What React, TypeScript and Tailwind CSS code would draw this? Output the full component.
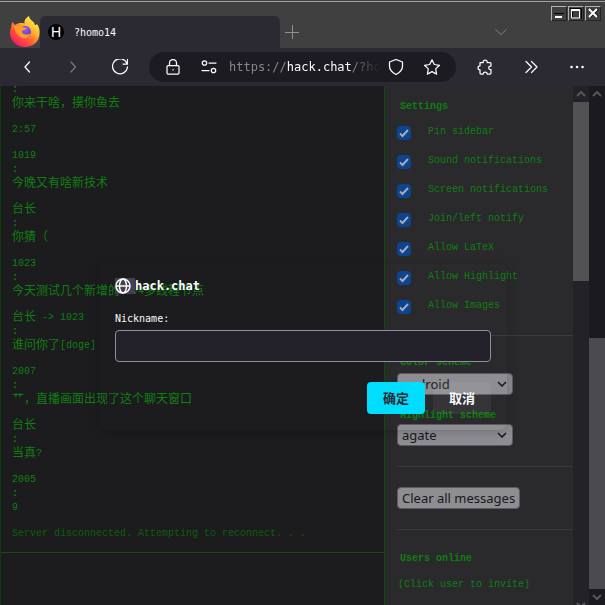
import type { ReactNode } from "react";

const L = ({ children }: { children: ReactNode }) => (
  <span className="inline-block align-middle font-['Liberation_Mono','Noto_Sans_CJK_SC',monospace] text-[10px] leading-3 whitespace-pre">
    {children}
  </span>
);

const messages: { nick?: ReactNode; continued?: boolean; text: ReactNode }[] = [
  { continued: true, text: "你来干啥，摸你鱼去" },
  { text: <L>2:57</L> },
  { nick: <L>1019</L>, text: "今晚又有啥新技术" },
  { nick: "台长", text: "你猜（" },
  { nick: <L>1023</L>, text: <>今天测试几个新增的<L>IPv4</L>多线程节点</> },
  { nick: <>台长<L>{" -> 1023"}</L></>, text: <>谁问你了<L>[doge]</L></> },
  { nick: <L>2007</L>, text: "艹，直播画面出现了这个聊天窗口" },
  { nick: "台长", text: <>当真<L>?</L></> },
  { nick: <L>2005</L>, text: <L>9</L> },
];

const settings = [
  "Pin sidebar",
  "Sound notifications",
  "Screen notifications",
  "Join/left notify",
  "Allow LaTeX",
  "Allow Highlight",
  "Allow Images",
];

function FirefoxLogo() {
  return (
    <svg viewBox="0 0 32 32" className="h-8 w-8 shrink-0" aria-hidden="true">
      <defs>
        <linearGradient id="flame" x1="0.85" y1="0.1" x2="0.2" y2="0.95">
          <stop offset="0" stopColor="#fff44f" />
          <stop offset="0.35" stopColor="#ffb02e" />
          <stop offset="0.65" stopColor="#ff5a36" />
          <stop offset="1" stopColor="#f5156c" />
        </linearGradient>
        <radialGradient id="globe" cx="0.5" cy="0.3" r="0.7">
          <stop offset="0" stopColor="#9059ff" />
          <stop offset="1" stopColor="#4a3fc4" />
        </radialGradient>
      </defs>
      <path d="M3 12c0-2 .5-4 1.500-6 1 1 1.500 2 2.500 3 2-1.500 4-2 6-2 1.500 0 2.500 0 3.500.5C16 4 18 2 21 0c.5 3 2 4 4 5.500 1 .8 1.500 2 2 3.500 1 0 1.500-.5 2-1 2 3 3 6 2.500 10C31 26 25 31 17 31S2 25 2 17c0-2 .3-3 1-5z" fill="url(#flame)" />
      <circle cx="17" cy="16" r="6" fill="url(#globe)" />
      <path d="M6 10c3 0 5-.5 7.500.5C15 11 16 12 19 12c-1 2-5 2-5 3.500 0 2 2 3 4.500 3 2 0 3-.5 4-1.500-.5 4-4 6-7.500 5-5-1-8-6-9-12z" fill="#ff9a2b" />
    </svg>
  );
}

function ScrollArrow({ up }: { up?: boolean }) {
  return (
    <span className="flex h-4 w-4 shrink-0 items-center justify-center text-[#58585c]">
      <svg viewBox="0 0 10 6" className="h-1.5 w-2.5" fill="none" stroke="currentColor" strokeWidth="2">
        <path d={up ? "m1 5 4-4 4 4" : "m1 1 4 4 4-4"} />
      </svg>
    </span>
  );
}

function WindowButton({ label, children }: { label: string; children: ReactNode }) {
  return (
    <button aria-label={label} className="h-[15px] w-4 border border-t-[#b0b0b0] border-r-[#222] border-b-[#222] border-l-[#b0b0b0] bg-[#404040]">
      <svg viewBox="0 0 14 13" className="h-[13px] w-3.5" fill="none">{children}</svg>
    </button>
  );
}

function TitleBar() {
  return (
    <header className="flex h-12 items-end border-t border-[#404040] bg-[#404040] pl-2 shadow-[inset_0_1px_0_#a0a0a0]">
      <FirefoxLogo />
      <div className="flex h-8 w-60 items-center gap-2.5 rounded-t-md bg-[#2b2a33] px-2">
        <span className="flex h-4 w-4 items-center justify-center rounded-full bg-black font-['Liberation_Sans',sans-serif] text-sm text-white">H</span>
        <span className="font-['DejaVu_Sans_Mono',monospace] text-[10px] text-[#fbfbfe]">?homo14</span>
      </div>
      <button aria-label="New tab" className="flex h-8 w-6 items-center justify-center text-[#909090]">
        <svg viewBox="0 0 14 14" className="h-3.5 w-3.5" stroke="currentColor"><path d="M7.500 0v14M0 7.500h14" /></svg>
      </button>
      <button aria-label="List all tabs" className="mr-11 ml-auto flex h-8 items-center text-[#808080]">
        <svg viewBox="0 0 12 6" className="h-1.5 w-3" fill="none" stroke="currentColor"><path d="M.5.5 6 5.500 11.500.5" /></svg>
      </button>
      <div className="mr-1 flex gap-px self-start pt-[5px]">
        <WindowButton label="Minimize">
          <path d="M2 6.500h10" stroke="#000" />
          <path d="M3 10h7" stroke="#fff" strokeWidth="2" />
        </WindowButton>
        <WindowButton label="Maximize">
          <path d="M1 1.500h11.500V12" stroke="#000" />
          <path d="M2.500 11V3h8v8z" stroke="#fff" />
          <path d="M2 3h9" stroke="#fff" strokeWidth="2" />
          <path d="M3.500 10V4.500" stroke="#000" />
        </WindowButton>
        <WindowButton label="Close">
          <path d="m4 2 8 8m0-8-8 8" stroke="#000" strokeWidth="2" />
          <path d="m3 2 8 8m0-8-8 8" stroke="#fff" strokeWidth="2" />
        </WindowButton>
      </div>
    </header>
  );
}

function NavIcon({ label, children, dim }: { label: string; children: ReactNode; dim?: boolean }) {
  return (
    <button aria-label={label} className={dim ? "shrink-0 text-[#77767c]" : "shrink-0 text-[#fbfbfe]"}>
      <svg viewBox="0 0 16 16" className="h-4 w-4" fill="none" stroke="currentColor" strokeWidth="1.250" strokeLinejoin="round" strokeLinecap="round">
        {children}
      </svg>
    </button>
  );
}

function NavBar() {
  return (
    <nav className="flex h-[38px] items-center bg-[#2b2a33] px-5">
      <div className="flex gap-[30px]">
        <NavIcon label="Back"><path d="M9.500 3 5 8l4.500 5" /></NavIcon>
        <NavIcon label="Forward" dim><path d="m5 3 4.500 5L5 13" /></NavIcon>
        <NavIcon label="Reload"><path d="M15 4.500A7.500 7.500 0 1 0 15.500 8M15.500.5V5H11" /></NavIcon>
      </div>
      <div className="mx-[21px] flex h-[30px] min-w-0 flex-1 items-center gap-5 rounded-full bg-[#1c1b22] px-4">
        <NavIcon label="Site security"><rect x="2" y="6.500" width="12" height="8.500" rx="1" /><path d="M4.500 6.500V4a3.500 3.500 0 0 1 7 0v2.500M8 10.500v.5" /></NavIcon>
        <NavIcon label="Permissions"><circle cx="3.500" cy="4" r="2.200" /><circle cx="12.500" cy="11.500" r="2.200" /><path d="M8 4h7M1 11.500h7" /></NavIcon>
        <span className="-mr-4 -ml-2 min-w-0 flex-1 font-['DejaVu_Sans_Mono',monospace] text-xs whitespace-nowrap text-[#87868c] [mask-image:linear-gradient(to_left,transparent_4px,black_32px)]">
          https://<span className="text-[#fbfbfe]">hack.chat</span>/?ho
        </span>
        <NavIcon label="Tracking protection"><path d="M8 .5 14.500 3v4c0 4-2.500 6.500-6.500 8.500C4 13.500 1.500 11 1.500 7V3z" /></NavIcon>
        <NavIcon label="Bookmark"><path d="m8 .8 2.300 4.700 5.200.8-3.800 3.600.9 5.200L8 12.600l-4.600 2.500.9-5.200L.5 6.300l5.200-.8z" /></NavIcon>
      </div>
      <div className="flex gap-[30px]">
        <NavIcon label="Extensions"><path d="M3 3.500h3.200V3a2 2 0 0 1 4 0v.5H13c.6 0 1 .4 1 1V7h-.5a1.800 1.800 0 0 0 0 3.600h.5V14c0 .6-.4 1-1 1h-2.800a2 2 0 0 0-4 0H4c-.6 0-1-.4-1-1v-3.200a2 2 0 0 1 0-4z" /></NavIcon>
        <NavIcon label="More tools"><path d="m3 2.500 5.500 5.500L3 13.500M8.500 2.500 14 8l-5.500 5.500" /></NavIcon>
        <NavIcon label="Application menu"><path d="M2.500 8h.1M8 8h.1M13.500 8h.1" strokeWidth="2.500" /></NavIcon>
      </div>
    </nav>
  );
}

function Chat() {
  return (
    <main className="flex min-w-0 flex-1 flex-col border-l border-[#0b3d0b] bg-[#1c1c1e] text-[#0f7f11]">
      <div className="flex min-h-0 flex-1 flex-col justify-end gap-3 overflow-hidden px-[11px] pb-[13px] font-['Noto_Sans_CJK_SC',sans-serif] text-xs leading-[14px] whitespace-nowrap">
        {messages.map((m, i) => (
          <div key={i}>
            {m.nick && <p className="h-3.5">{m.nick}</p>}
            {(m.nick || m.continued) && <p className="h-3.5 font-bold"><L>:</L></p>}
            <p className="h-3.5">{m.text}</p>
          </div>
        ))}
        <p className="h-3.5 text-[#0e5c10]"><L>Server disconnected. Attempting to reconnect. . .</L></p>
      </div>
      <textarea aria-label="Message" className="block h-[53px] resize-none border-t border-[#0e5410] bg-transparent outline-none" />
    </main>
  );
}

function Select({ id, value }: { id: string; value: string }) {
  return (
    <div className="relative w-fit">
      <select id={id} className="block h-[22px] w-[116px] appearance-none rounded border border-[#5b5a66] bg-[#8e8d92] px-1 font-['Noto_Sans',sans-serif] text-[13px] leading-5 text-[#18181a]">
        <option>{value}</option>
      </select>
      <svg viewBox="0 0 10 6" className="pointer-events-none absolute top-2 right-1.5 h-1.5 w-2.5 text-[#18181a]" fill="none" stroke="currentColor" strokeWidth="1.500">
        <path d="m1 1 4 4 4-4" />
      </svg>
    </div>
  );
}

function Sidebar() {
  return (
    <aside className="w-[189px] shrink-0 overflow-hidden border-l border-[#0b4d0b] bg-[#2a2a2c] pl-3 font-['Liberation_Mono',monospace] text-[10px] leading-[14px] text-[#0f7f11]">
      <h4 className="mt-3.5 pl-[3px] font-bold">Settings</h4>
      <ul className="mt-3">
        {settings.map((s) => (
          <li key={s} className="h-[29px]">
            <label className="flex items-start gap-[17px]">
              <input type="checkbox" defaultChecked className="peer sr-only" />
              <span className="flex h-3.5 w-3.5 items-center justify-center rounded-sm bg-[#0d4490]">
                <svg viewBox="0 0 12 12" className="h-3 w-3" fill="none" stroke="#a9a9b0" strokeWidth="2"><path d="m2 6.500 2.500 2.500L10 3" /></svg>
              </span>
              <span className="leading-3">{s}</span>
            </label>
          </li>
        ))}
      </ul>
      <hr className="mt-1.5 border-[#3b3b3e]" />
      <label htmlFor="scheme" className="mt-5 block pl-[3px] font-bold">Color scheme</label>
      <div className="mt-[3px]"><Select id="scheme" value="android" /></div>
      <label htmlFor="highlight" className="mt-3.5 block pl-[3px] font-bold">Highlight scheme</label>
      <div className="mt-px"><Select id="highlight" value="agate" /></div>
      <hr className="mt-5 border-[#3b3b3e]" />
      <button className="mt-5 h-[22px] rounded border border-[#5b5a66] bg-[#8e8d92] px-1 font-['Noto_Sans',sans-serif] text-[13px] leading-5 whitespace-nowrap text-[#18181a]">
        Clear all messages
      </button>
      <hr className="mt-5 border-[#3b3b3e]" />
      <h4 className="mt-[22px] pl-[3px] font-bold">Users online</h4>
      <p className="mt-3 pl-px">(Click user to invite)</p>
    </aside>
  );
}

function Dialog() {
  return (
    <form role="dialog" aria-label="hack.chat" className="absolute top-[178px] left-[99px] w-[408px] rounded-lg px-4 pt-3.5 pb-4 font-['DejaVu_Sans_Mono','Noto_Sans_CJK_SC',monospace] text-[10px] text-[#fbfbfe] shadow-[0_2px_12px_rgba(0,0,0,0.2)]">
      <h2 className="flex h-4 items-center text-xs font-bold">
        <span className="flex h-4 w-5 items-center bg-[#42414d]">
          <svg viewBox="0 0 16 16" className="h-4 w-4" fill="none" stroke="#fbfbfe" strokeWidth="1.500"><circle cx="8" cy="8" r="7" /><ellipse cx="8" cy="8" rx="3.500" ry="7" /><path d="M1 8h14" /></svg>
        </span>
        hack.chat
      </h2>
      <label htmlFor="nickname" className="mt-[17px] block leading-4">Nickname:</label>
      <input id="nickname" className="mt-[3px] block h-8 w-full rounded border border-[#8f8f9d] bg-[#23222b] px-2 outline-none" />
      <div className="mt-5 flex justify-end gap-2 font-['Noto_Sans_CJK_SC',sans-serif] text-[13px] font-bold">
        <button type="button" className="h-8 w-[58px] rounded bg-[#00ddff] text-[#2b2a33]">确定</button>
        <button type="button" className="h-8 w-[58px] rounded bg-white/5">取消</button>
      </div>
    </form>
  );
}

export default function App() {
  return (
    <div className="flex h-screen flex-col overflow-hidden bg-[#1c1c1e]">
      <TitleBar />
      <NavBar />
      <div className="relative flex min-h-0 flex-1">
        <Chat />
        <Sidebar />
        <div className="flex w-4 shrink-0 flex-col bg-[#232228]">
          <ScrollArrow up />
          <div className="h-[179px] bg-[#525254]" />
          <div className="mt-auto -mb-2"><ScrollArrow /></div>
        </div>
        <div className="flex w-4 shrink-0 flex-col bg-[#1b1a1f]">
          <ScrollArrow up />
          <div className="mt-auto h-[251px] bg-[#4b4a50]" />
          <ScrollArrow />
        </div>
        <Dialog />
      </div>
    </div>
  );
}
